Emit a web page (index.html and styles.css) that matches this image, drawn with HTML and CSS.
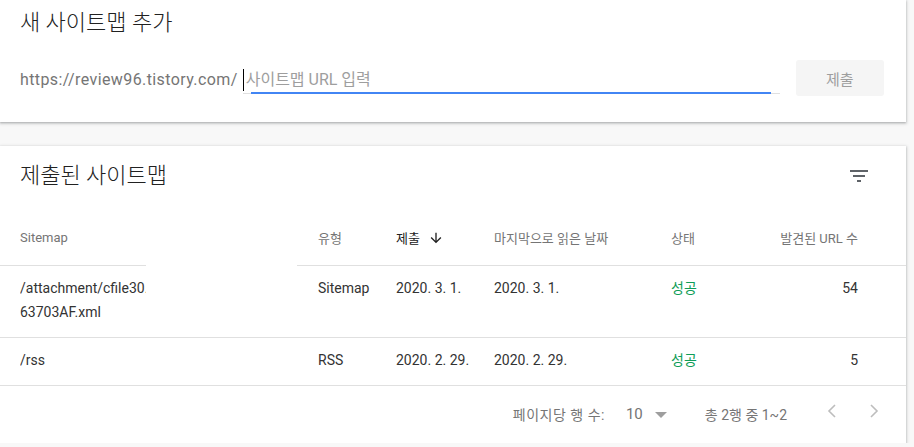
FILE: index.html
```html
<!DOCTYPE html>
<html lang="ko">
<head>
  <meta charset="UTF-8" />
  <meta name="viewport" content="width=device-width, initial-scale=1.0" />
  <title>Sitemaps</title>
  <link rel="stylesheet" href="styles.css">
</head>
<body>
  <!-- Add sitemap card -->
  <div class="card add-card">
    <h2 class="card-title">새 사이트맵 추가</h2>
    <div class="add-row">
      <span class="url-prefix">https://review96.tistory.com/</span>
      <div class="url-field">
        <span class="caret"></span>
        <span class="placeholder">사이트맵 URL 입력</span>
        <span class="focus-line"></span>
      </div>
      <button class="submit-btn">제출</button>
    </div>
  </div>

  <!-- Submitted sitemaps card -->
  <div class="card list-card">
    <div class="list-head">
      <h2 class="card-title">제출된 사이트맵</h2>
      <svg class="filter-icon" width="24" height="24" viewBox="0 0 24 24">
        <path d="M10 18h4v-2h-4v2zM3 6v2h18V6H3zm3 7h12v-2H6v2z" fill="#5f6368"/>
      </svg>
    </div>

    <div class="row head-row">
      <div>Sitemap</div>
      <div>유형</div>
      <div class="sorted">제출
        <svg width="16" height="16" viewBox="0 0 24 24">
          <path d="M20 12l-1.41-1.41L13 16.17V4h-2v12.17l-5.58-5.59L4 12l8 8 8-8z" fill="#212121"/>
        </svg>
      </div>
      <div>마지막으로 읽은 날짜</div>
      <div>상태</div>
      <div class="num">발견된 URL 수</div>
    </div>

    <div class="row data-row">
      <div class="path">/attachment/cfile30.uf@99A1E6335E5B<br>63703AF.xml</div>
      <div>Sitemap</div>
      <div>2020. 3. 1.</div>
      <div>2020. 3. 1.</div>
      <div class="ok">성공</div>
      <div class="num">54</div>
    </div>
    <div class="row data-row">
      <div class="path">/rss</div>
      <div>RSS</div>
      <div>2020. 2. 29.</div>
      <div>2020. 2. 29.</div>
      <div class="ok">성공</div>
      <div class="num">5</div>
    </div>

    <div class="pager">
      <span class="pager-label">페이지당 행 수:</span>
      <span class="pager-size">10</span>
      <span class="drop"></span>
      <span class="pager-range">총 2행 중 1~2</span>
      <svg class="chev" width="24" height="24" viewBox="0 0 24 24">
        <polyline points="15,6 9,12 15,18" fill="none" stroke="#bdbdbd" stroke-width="1.6"/>
      </svg>
      <svg class="chev next" width="24" height="24" viewBox="0 0 24 24">
        <polyline points="9,6 15,12 9,18" fill="none" stroke="#bdbdbd" stroke-width="1.6"/>
      </svg>
    </div>

    <!-- white patch over the long path -->
    <div class="mask"></div>
  </div>
</body>
</html>
```

FILE: styles.css
```css
body {
  margin: 0;
  background: #f8f8f8;
  font-family: Roboto, "Noto Sans CJK KR", sans-serif;
  color: #333;
}
.card {
  width: 906px;
  background: #fff;
  box-shadow: 0 1px 2px 0 rgba(60, 64, 67, 0.3), 0 1px 3px 1px rgba(60, 64, 67, 0.15);
  position: relative;
}
.card-title {
  margin: 0;
  font-size: 22px;
  font-weight: 300;
  line-height: 28px;
  color: #212121;
}

/* Add sitemap */
.add-card {
  height: 122px;
  padding: 9px 0 0 20px;
  box-sizing: border-box;
}
.add-row {
  display: flex;
  align-items: center;
  height: 36px;
  margin-top: 23px;
}
.url-prefix {
  font-size: 16px;
  letter-spacing: 0.4px;
  color: #757575;
  padding-top: 3px;
}
.url-field {
  position: relative;
  width: 537px;
  height: 34px;
  margin-left: 5px;
  box-sizing: border-box;
  border-bottom: 1px solid #e0e0e0;
  align-self: flex-start;
  display: flex;
  align-items: flex-end;
  padding-bottom: 1px;
}
.caret {
  width: 1px;
  height: 22px;
  background: #000;
  margin-bottom: 1px;
}
.placeholder {
  font-size: 16px;
  line-height: 24px;
  color: #9e9e9e;
  margin-left: 2px;
}
.focus-line {
  position: absolute;
  left: 8px;
  bottom: -1px;
  width: 520px;
  height: 2px;
  background: #4285f4;
}
.submit-btn {
  margin-left: 16px;
  width: 88px;
  height: 36px;
  border: none;
  border-radius: 3px;
  background: #f5f5f5;
  color: #9e9e9e;
  font-family: Roboto, "Noto Sans CJK KR", sans-serif;
  font-size: 15px;
}

/* Submitted list */
.list-card {
  margin-top: 24px;
  height: 297px;
}
.list-head {
  display: flex;
  justify-content: space-between;
  align-items: center;
  height: 60px;
  padding: 0 35px 0 20px;
}
.row {
  display: grid;
  grid-template-columns: 298px 78px 98px 177px 100px 87px;
  padding-left: 20px;
  border-bottom: 1px solid #e0e0e0;
}
.head-row {
  height: 60px;
  box-sizing: border-box;
  align-items: center;
  padding-top: 4px;
  font-size: 13px;
  color: #757575;
}
.sorted {
  color: #212121;
  display: flex;
  align-items: center;
  gap: 8px;
}
.num { text-align: right; }
.data-row {
  padding-top: 10px;
  padding-bottom: 13px;
  font-size: 14px;
  line-height: 24px;
}
.path {
  overflow: hidden;
  white-space: nowrap;
}
.ok { color: #0f9d58; }

.pager {
  display: flex;
  align-items: center;
  justify-content: flex-end;
  height: 56px;
  padding-right: 20px;
  font-size: 14px;
  color: #757575;
}
.pager-label { letter-spacing: 0.5px; }
.pager-size {
  font-size: 15px;
  margin-left: 21px;
}
.drop {
  width: 0;
  height: 0;
  border-left: 6px solid transparent;
  border-right: 6px solid transparent;
  border-top: 6px solid #9e9e9e;
  margin-left: 12px;
  margin-top: 2px;
}
.pager-range { margin-left: 38px; }
.chev { margin-left: 33px; margin-top: -7px; }
.chev.next { margin-left: 18px; }

.mask {
  position: absolute;
  left: 146px;
  top: 118px;
  width: 151px;
  height: 38px;
  background: #fff;
}
```
